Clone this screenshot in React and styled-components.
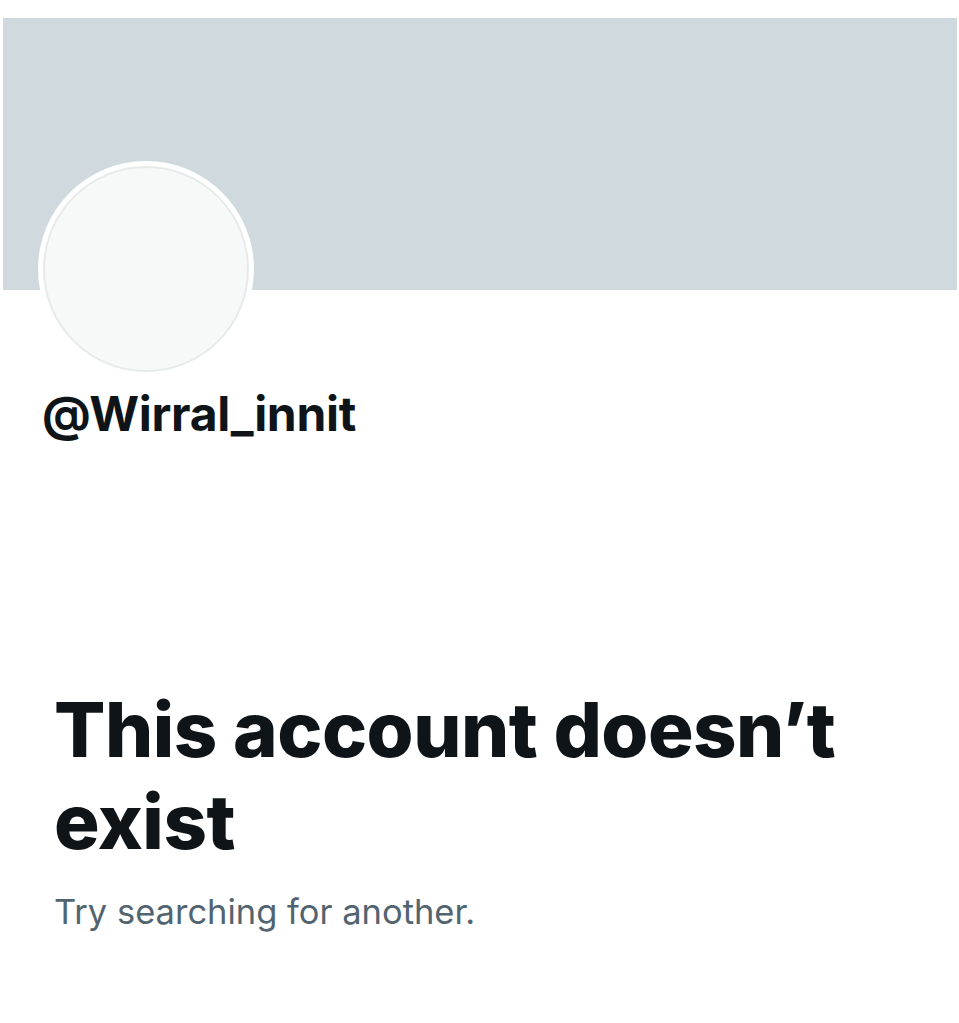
import React from "react";
import styled, { createGlobalStyle } from "styled-components";

const Global = createGlobalStyle`
  html, body { margin: 0; padding: 0; background: #ffffff; }
  body { font-family: Inter, "Liberation Sans", Arial, sans-serif; }
`;

const Page = styled.div`
  width: 959px;
  min-height: 1023px;
  padding-top: 18px;
  box-sizing: border-box;
  display: flex;
  flex-direction: column;
`;

const Banner = styled.div`
  margin-left: 3px;
  width: 954px;
  height: 272px;
  background: #cfd9de;
`;

const ProfileHead = styled.div`
  padding-left: 38px;
  display: flex;
  flex-direction: column;
`;

const Avatar = styled.div`
  margin-top: -129px;
  width: 216px;
  height: 216px;
  border-radius: 50%;
  background: #ffffff;
  padding: 5px;
  box-sizing: border-box;
`;

const AvatarInner = styled.div`
  width: 100%;
  height: 100%;
  border-radius: 50%;
  background: #f7f9f9;
  border: 2px solid #e7eaeb;
  box-sizing: border-box;
`;

const Handle = styled.div`
  margin-top: 9px;
  margin-left: 4px;
  font-size: 48px;
  line-height: 56px;
  font-weight: 700;
  color: #0f1419;
  letter-spacing: -0.3px;
`;

const Empty = styled.div`
  padding-left: 54px;
  margin-top: 241px;
  display: flex;
  flex-direction: column;
`;

const Title = styled.h1`
  margin: 0;
  font-size: 76px;
  line-height: 92px;
  font-weight: 800;
  color: #0f1419;
  letter-spacing: -0.5px;
`;

const Sub = styled.p`
  margin: 23px 0 0;
  font-size: 34.5px;
  line-height: 44px;
  font-weight: 400;
  color: #536471;
`;

export default function App() {
  return (
    <Page>
      <Global />
      <Banner />
      <ProfileHead>
        <Avatar>
          <AvatarInner />
        </Avatar>
        <Handle>@Wirral_innit</Handle>
      </ProfileHead>
      <Empty>
        <Title>
          This account doesn’t
          <br />
          exist
        </Title>
        <Sub>Try searching for another.</Sub>
      </Empty>
    </Page>
  );
}
